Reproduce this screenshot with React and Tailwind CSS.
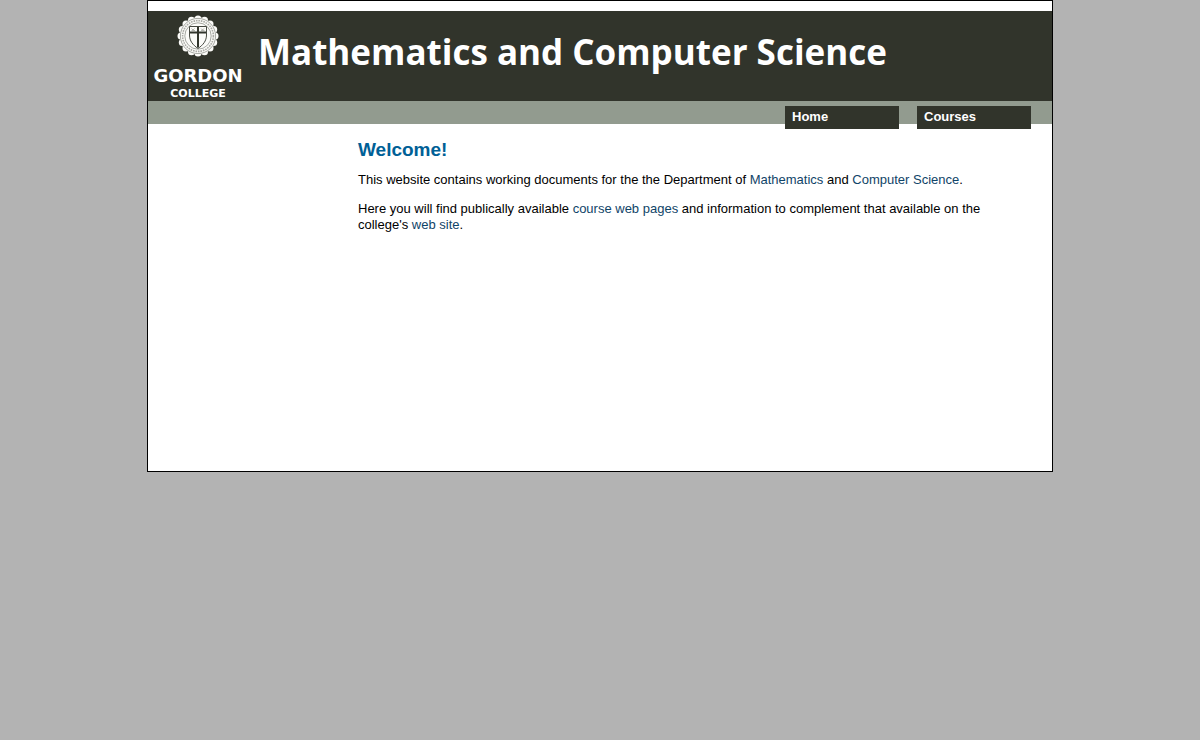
const navLinks = [
  { label: "Home", href: "#home" },
  { label: "Courses", href: "#courses" },
];

// 16 lobes around the rim of the seal
const scallops = Array.from({ length: 16 }, (_, i) => {
  const angle = (i * Math.PI) / 8;
  return { cx: 21 + 17 * Math.cos(angle), cy: 21 + 17 * Math.sin(angle) };
});

const Seal = () => (
  <svg width="42" height="42" viewBox="0 0 42 42" className="shrink-0" aria-hidden="true">
    <g fill="#fbfbf8">
      <circle cx="21" cy="21" r="18.5" />
      {scallops.map(({ cx, cy }, i) => (
        <circle key={i} cx={cx} cy={cy} r="3.5" />
      ))}
    </g>
    <g fill="none" stroke="#31342b">
      <circle cx="21" cy="21" r="17.6" strokeWidth="0.7" opacity="0.6" />
      <circle cx="21" cy="21" r="15.4" strokeWidth="1.6" strokeDasharray="1.6 0.9" opacity="0.4" />
      <circle cx="21" cy="21" r="13.2" strokeWidth="0.7" opacity="0.6" />
    </g>
    {/* shield */}
    <path
      d="M12.5 11.5H29.5V20C29.5 26 26 30 21 33.5C16 30 12.5 26 12.5 20Z"
      fill="#fbfbf8"
      stroke="#31342b"
      strokeWidth="0.9"
    />
    <path d="M21 12V32.5M13 17.5H29" stroke="#31342b" strokeWidth="2" />
    <path
      d="M14.5 13.5l1.5 1.5 1.5-1.5M14.5 15.5h3.5M24 13.5l1.5 1.5 1.5-1.5M24 15.5h3.5"
      fill="none"
      stroke="#31342b"
      strokeWidth="0.7"
      opacity="0.5"
    />
  </svg>
);

const Logo = () => (
  <div className="flex w-[100px] flex-col items-center pt-1 font-['DejaVu_Sans',sans-serif] font-bold text-white">
    <Seal />
    <div className="mt-[9px] text-[18px] leading-5">GORDON</div>
    <div className="text-[11px] leading-4">COLLEGE</div>
  </div>
);

const TextLink = ({ href, children }) => (
  <a href={href} className="text-[#104468] hover:underline">
    {children}
  </a>
);

const App = () => {
  return (
    <div className="min-h-screen bg-[#b3b3b3] font-['Liberation_Sans',Arial,sans-serif] text-[13px] leading-4 text-black">
      <div className="mx-auto min-h-[472px] w-full max-w-[906px] border border-black bg-white pt-[10px]">
        <header className="flex h-[90px] bg-[#31342b]">
          <Logo />
          <h1 className="pt-4 pl-[10px] font-['Open_Sans',sans-serif] text-[35px] leading-[50px] font-bold text-white">
            Mathematics and Computer Science
          </h1>
        </header>

        {/* the tabs hang a little below the bar */}
        <nav className="flex h-[23px] justify-end gap-[18px] bg-[#929b8f] pt-[5px] pr-[21px]">
          {navLinks.map(({ label, href }) => (
            <a
              key={label}
              href={href}
              className="h-[23px] w-[114px] bg-[#31342b] px-[7px] pt-[3px] font-bold text-white"
            >
              {label}
            </a>
          ))}
        </nav>

        <main className="mr-[42px] ml-[210px] pt-[14px]">
          <h2 className="text-[19px] leading-6 font-bold text-[#006096]">
            Welcome!
          </h2>
          <p className="mt-[10px]">
            This website contains working documents for the the Department of{" "}
            <TextLink href="#mathematics">Mathematics</TextLink> and{" "}
            <TextLink href="#computer-science">Computer Science</TextLink>.
          </p>
          <p className="mt-[13px]">
            Here you will find publically available{" "}
            <TextLink href="#courses">course web pages</TextLink> and
            information to complement that available on the college's{" "}
            <TextLink href="#college">web site</TextLink>.
          </p>
        </main>
      </div>
    </div>
  );
};

export default App;
